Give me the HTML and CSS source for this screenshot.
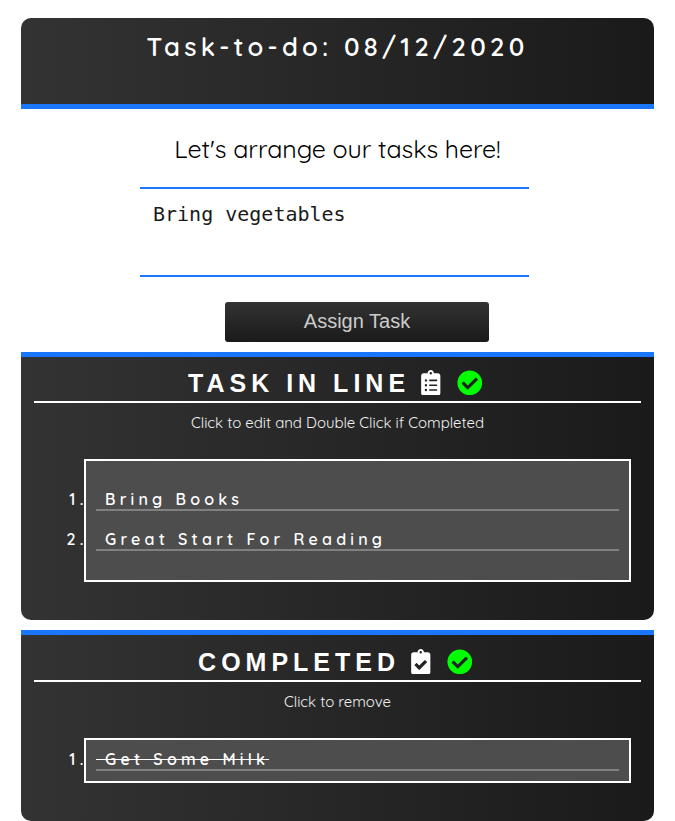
FILE: index.html
```html
<!DOCTYPE html>
<html lang="en">
<head>
<meta charset="utf-8">
<title>Task-to-do</title>
<link rel="stylesheet" href="styles.css">
</head>
<body>
<header class="header"><h1>Task-to-do: 08/12/2020</h1></header>
<main>
<form class="entry">
<p class="intro">Let's arrange our tasks here!</p>
<textarea class="task-input" spellcheck="false">Bring vegetables</textarea>
<button class="assign" type="button">Assign Task</button>
</form>
<section class="panel">
<h2 class="title"><span>TASK IN LINE</span>
<svg class="clipboard" viewBox="0 0 384 512"><path fill-rule="evenodd" d="M336 64h-80c0-35.300-28.700-64-64-64s-64 28.700-64 64H48C21.500 64 0 85.500 0 112v352c0 26.500 21.500 48 48 48h288c26.500 0 48-21.500 48-48V112c0-26.500-21.500-48-48-48zM96 424a24 24 0 1 1 0-48 24 24 0 0 1 0 48zm0-96a24 24 0 1 1 0-48 24 24 0 0 1 0 48zm0-96a24 24 0 1 1 0-48 24 24 0 0 1 0 48zm96-192a24 24 0 1 1 0 48 24 24 0 0 1 0-48zm128 368c0 4.400-3.600 8-8 8H168c-4.400 0-8-3.600-8-8v-16c0-4.400 3.600-8 8-8h144c4.400 0 8 3.600 8 8zm0-96c0 4.400-3.600 8-8 8H168c-4.400 0-8-3.600-8-8v-16c0-4.400 3.600-8 8-8h144c4.400 0 8 3.600 8 8zm0-96c0 4.400-3.600 8-8 8H168c-4.400 0-8-3.600-8-8v-16c0-4.400 3.600-8 8-8h144c4.400 0 8 3.600 8 8z"/></svg>
<svg class="check" viewBox="0 0 512 512"><path d="M504 256c0 136.967-111.033 248-248 248S8 392.967 8 256 119.033 8 256 8s248 111.033 248 248zM227.314 387.314l184-184c6.248-6.248 6.248-16.379 0-22.627l-22.627-22.627c-6.248-6.249-16.379-6.249-22.628 0L216 308.118l-70.059-70.059c-6.248-6.248-16.379-6.248-22.628 0l-22.627 22.627c-6.248 6.248-6.248 16.379 0 22.627l104 104c6.249 6.249 16.379 6.249 22.628.001z"/></svg>
</h2>
<p class="hint">Click to edit and Double Click if Completed</p>
<ol class="list open">
<li><span>&nbsp;Bring Books</span></li>
<li><span>&nbsp;Great Start For Reading</span></li>
</ol>
</section>
<section class="panel done">
<h2 class="title"><span>COMPLETED</span>
<svg class="clipboard" viewBox="0 0 384 512"><path fill-rule="evenodd" d="M336 64h-80c0-35.300-28.700-64-64-64s-64 28.700-64 64H48C21.500 64 0 85.500 0 112v352c0 26.500 21.500 48 48 48h288c26.500 0 48-21.500 48-48V112c0-26.500-21.500-48-48-48zM192 40a24 24 0 1 1 0 48 24 24 0 0 1 0-48zm121.200 231.800l-143 141.800c-4.700 4.700-12.300 4.600-17-.1l-82.600-83.300c-4.700-4.700-4.600-12.300.1-17L99.100 285c4.700-4.700 12.300-4.600 17 .1l46 46.400 106-105.200c4.700-4.700 12.300-4.600 17 .1l28.200 28.400c4.700 4.800 4.600 12.300-.1 17z"/></svg>
<svg class="check" viewBox="0 0 512 512"><path d="M504 256c0 136.967-111.033 248-248 248S8 392.967 8 256 119.033 8 256 8s248 111.033 248 248zM227.314 387.314l184-184c6.248-6.248 6.248-16.379 0-22.627l-22.627-22.627c-6.248-6.249-16.379-6.249-22.628 0L216 308.118l-70.059-70.059c-6.248-6.248-16.379-6.248-22.628 0l-22.627 22.627c-6.248 6.248-6.248 16.379 0 22.627l104 104c6.249 6.249 16.379 6.249 22.628.001z"/></svg>
</h2>
<p class="hint">Click to remove</p>
<ol class="list">
<li><span class="milk">&nbsp;Get Some Milk</span></li>
</ol>
</section>
</main>
</body>
</html>
```
FILE: styles.css
```css
* { box-sizing: border-box; }
html { overflow: hidden; }
body {
  margin: 0;
  padding: 18px 21px 0;
  background: #fff;
  font-family: Quicksand, Lato, sans-serif;
}
h1, h2, p, ol { margin: 0; padding: 0; }
.header {
  height: 91px;
  padding-top: 13px;
  border-bottom: 5px solid #1a75ff;
  border-radius: 10px 10px 0 0;
  background: linear-gradient(to right, #333, #1a1a1a);
  color: #fff;
  text-align: center;
}
h1 {
  font-size: 25.6px;
  line-height: 31px;
  font-weight: 600;
  letter-spacing: 4.25px;
  white-space: nowrap;
}
.entry { height: 243px; padding-top: 24px; display: flex; flex-direction: column; }
.intro {
  height: 32px;
  line-height: 32px;
  font-size: 25px;
  font-weight: 400;
  letter-spacing: -0.06px;
  text-align: center;
  white-space: nowrap;
}
.task-input {
  width: 389px;
  height: 90px;
  margin: 22px 0 0 119px;
  padding: 13px;
  border: solid #1a75ff;
  border-width: 2px 0;
  outline: none;
  resize: none;
  overflow: hidden;
  background: #fff;
  color: #1a1a1a;
  font: 20px/24px "DejaVu Sans Mono", monospace;
}
.assign {
  width: 264px;
  height: 40px;
  margin: 25px 0 0 204px;
  padding: 0 0 2px;
  border: 0;
  border-radius: 3px;
  background: linear-gradient(#333, #1a1a1a);
  color: #ccc;
  font: 20px "Liberation Sans", sans-serif;
}
.panel {
  height: 268px;
  padding: 11px 13px 0;
  border-top: 5px solid #1a75ff;
  border-radius: 0 0 10px 10px;
  background: linear-gradient(to right, #333, #1a1a1a);
  color: #fff;
}
.done { height: 191px; margin-top: 10px; }
.title {
  display: flex;
  justify-content: center;
  height: 35px;
  border-bottom: 2px solid #fff;
  font: bold 25px/31px "Liberation Sans", sans-serif;
  letter-spacing: 5px;
  white-space: nowrap;
}
.done .title { height: 36px; padding-top: 1px; }
.clipboard { width: 19.5px; height: 25.6px; margin: 1.5px 0 0 11.2px; fill: #fff; }
.check { width: 25.6px; height: 25.6px; margin: 1.5px 4.6px 0 16px; fill: #0f0; }
.hint {
  height: 20px;
  margin-top: 10px;
  font-size: 15px;
  line-height: 20px;
  font-weight: 400;
  letter-spacing: -0.02px;
  text-align: center;
  color: #f2f2f2;
  white-space: nowrap;
}
.list {
  margin: 26px 10px 0 50px;
  padding: 0 10px 10px;
  border: 2px solid #fff;
  background: #4d4d4d;
  list-style: none;
  counter-reset: item;
}
.list.open { padding: 19px 10px 29px; }
.list li {
  position: relative;
  height: 31px;
  padding-top: 9px;
  border-bottom: 2px solid #808080;
  font-size: 16px;
  line-height: 20px;
  font-weight: 600;
  letter-spacing: 4.2px;
  white-space: nowrap;
  counter-increment: item;
}
.list li + li { height: 40px; padding-top: 18px; }
.list li::before {
  content: counter(item) ".";
  position: absolute;
  right: 100%;
  margin-right: 8.5px;
}
.list span { word-spacing: 0.4px; }
.milk { text-decoration: line-through; }
```
